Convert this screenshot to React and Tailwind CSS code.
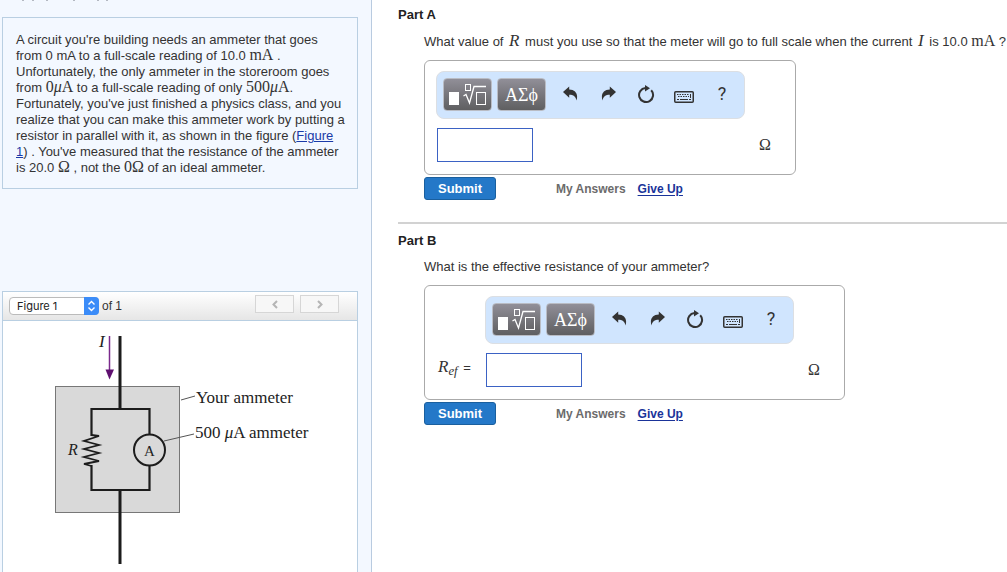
const serif = "font-['Liberation_Serif',serif]";

function Var({ children }) {
  return <i className="mx-0.5 font-['Liberation_Serif',serif] text-[17px] leading-3">{children}</i>;
}

function Unit({ children }) {
  return <span className="font-['Liberation_Serif',serif] text-base leading-3">{children}</span>;
}

function TemplateIcon() {
  return (
    <svg viewBox="0 0 38 22" className="h-[22px] w-[38px]" fill="none" stroke="#fff" aria-hidden="true">
      <rect x="0" y="8" width="10" height="13" fill="#fff" stroke="none" />
      <rect x="16.5" y="0.5" width="5" height="6" />
      <path d="M14.5 12l2.5-1.5 3.5 8.500L25 2.500h12" strokeWidth="1.3" />
      <rect x="27.5" y="8.5" width="9" height="12" />
    </svg>
  );
}

function UndoIcon() {
  return (
    <svg viewBox="0 0 15 15" className="h-[15px] w-[15px]" fill="#333" aria-hidden="true">
      <path d="M0 6L6.2.5v2.900C12.500 3.600 15.500 8 13.500 14.500 12.600 10.500 10.500 8.800 6.200 8.800v3z" />
    </svg>
  );
}

function RedoIcon() {
  return (
    <svg viewBox="0 0 15 15" className="h-[15px] w-[15px]" fill="#333" aria-hidden="true">
      <path d="M15 6L8.800.5v2.900C2.500 3.600-.5 8 1.500 14.500 2.400 10.500 4.500 8.800 8.800 8.800v3z" />
    </svg>
  );
}

function ResetIcon() {
  return (
    <svg viewBox="0 0 18 18" className="h-[18px] w-[18px]" aria-hidden="true">
      <path d="M14.200 5.200A7 7 0 1 1 8.500 3" fill="none" stroke="#333" strokeWidth="2" />
      <path d="M8 0l5 3.200L8 6.600z" fill="#333" />
    </svg>
  );
}

function KeyboardIcon() {
  return (
    <svg viewBox="0 0 20 12" className="h-3 w-5" fill="none" stroke="#333" aria-hidden="true">
      <rect x="0.75" y="0.75" width="18.5" height="10.5" rx="1" strokeWidth="1.5" />
      <path d="M3 3.500h12M4 5.500h11" strokeDasharray="1.5 1" />
      <path d="M3 8.500h2M6 8.500h8M15 8.500h2M16.500 3v4" />
    </svg>
  );
}

const darkButton =
  "flex h-[33px] w-[49px] items-center justify-center rounded border border-[#b9bcc4] bg-linear-to-b from-[#918f98] to-[#5f5f61] text-white";

function Toolbar() {
  return (
    <div className="flex h-12 items-center rounded-lg border border-[#dcdfe3] bg-[#d0e5fe] pr-[3px] pb-px pl-1.5 text-[#333]">
      <button type="button" aria-label="Templates" className={darkButton}>
        <TemplateIcon />
      </button>
      <button
        type="button"
        aria-label="Greek symbols"
        className={`${darkButton} ml-[5px] ${serif} text-lg leading-none`}
      >
        ΑΣϕ
      </button>
      <div className="mb-0.5 ml-[5px] flex">
        <ToolButton label="Undo"><UndoIcon /></ToolButton>
        <ToolButton label="Redo"><RedoIcon /></ToolButton>
        <ToolButton label="Reset"><ResetIcon /></ToolButton>
        <ToolButton label="Keyboard"><span className="block pt-1.5"><KeyboardIcon /></span></ToolButton>
        <ToolButton label="Help">
          <span className="font-[Roboto,sans-serif] text-lg leading-none">?</span>
        </ToolButton>
      </div>
    </div>
  );
}

function ToolButton({ label, children }) {
  return (
    <button type="button" aria-label={label} className="flex h-8 w-[38px] items-center justify-center">
      {children}
    </button>
  );
}

function AnswerBox({ id, label }) {
  return (
    <div className="flex w-fit rounded-md border border-[#aaa] pt-2.5 pr-6 pb-3 pl-[11px]">
      {label && (
        <label htmlFor={id} className="mt-[62px] w-[49px] whitespace-nowrap text-[13px] leading-5">
          {label}
        </label>
      )}
      <div>
        <div className="mr-[26px]">
          <Toolbar />
        </div>
        <div className="mt-[9px] flex items-center justify-between">
          <input
            id={id}
            type="text"
            aria-label={label ? undefined : "Answer"}
            className="ml-px h-[34px] w-24 border border-[#3b62c4] bg-white px-2 text-sm outline-none"
          />
          <Unit>Ω</Unit>
        </div>
      </div>
    </div>
  );
}

function SubmitRow() {
  return (
    <div className="mt-0.5 flex items-center text-xs font-bold">
      <button
        type="button"
        className="h-[23px] w-[72px] rounded-[3px] border border-[#1a5f9e] bg-[#2478c8] text-[13px] leading-none text-white"
      >
        Submit
      </button>
      <span className="ml-[60px] text-[#6b6b6b]">My Answers</span>
      <a href="#give-up" className="ml-3 text-[#1a3399] underline underline-offset-2">
        Give Up
      </a>
    </div>
  );
}

function Circuit() {
  return (
    <svg
      viewBox="0 0 354 252"
      className="block h-[252px] w-[354px] font-['Liberation_Serif',serif]"
      role="img"
      aria-label="Ammeter circuit with resistor R in parallel"
    >
      <rect x="52.5" y="65.5" width="124" height="126" fill="#d9d9d9" stroke="#777" />
      <g fill="none" stroke="#1c1c1c" strokeWidth="2.2">
        <path d="M117 15v73M117 169v74" strokeWidth="3" />
        <path d="M88.500 115V88h58v26M146.500 145v24h-58v-25" />
        <path
          d="M88.500 114l7.500 1-15 5 15 4-15 4 15 4-15 4 15 4-15 3 7.500 2"
          strokeWidth="1.800"
        />
        <circle cx="146.500" cy="129" r="15.500" strokeWidth="2" />
      </g>
      <path d="M106.500 15v35" stroke="#7b2a8c" strokeWidth="1.500" />
      <path d="M102.500 48.500h8.500l-4.500 10z" fill="#5f1070" />
      <path d="M178 79l14-4M161 120l30-7" stroke="#555" />
      <g fill="#222" fontSize="17">
        <text x="96" y="26" fontStyle="italic">I</text>
        <text x="65" y="134" fontSize="16" fontStyle="italic">R</text>
        <text x="141" y="135" fontSize="15">A</text>
        <text x="193" y="82">Your ammeter</text>
        <text x="192" y="117">500 <tspan fontStyle="italic">μ</tspan>A ammeter</text>
      </g>
    </svg>
  );
}

function FigurePanel() {
  return (
    <section id="figure" className="mt-[102px] flex-1 border border-b-0 border-[#b9cfe2] bg-white">
      <div className="flex h-[29px] items-center border-b border-[#b9cfe2] bg-linear-to-b from-white to-[#e6e6e6] pl-1.5 text-xs">
        <div className="relative">
          <select
            aria-label="Figure"
            className="block h-[18px] w-[90px] appearance-none rounded border border-[#bbb] bg-white pl-[7px] font-[Inter,sans-serif] text-[11px] leading-4 text-[#222]"
          >
            <option>Figure 1</option>
          </select>
          <svg viewBox="0 0 15 18" className="pointer-events-none absolute top-0 right-0 h-[18px] w-[15px]" aria-hidden="true">
            <path d="M0 0h11a4 4 0 0 1 4 4v10a4 4 0 0 1-4 4H0z" fill="#3b8cf8" />
            <path d="M4.500 7.500l3-3 3 3M4.500 10.500l3 3 3-3" fill="none" stroke="#fff" strokeWidth="1.4" />
          </svg>
        </div>
        <span className="ml-[3px]">of 1</span>
        <div className="mr-[18px] mb-1 ml-auto flex gap-1.5">
          <PagerButton label="Previous figure" d="M6 1L2.500 4.500 6 8" />
          <PagerButton label="Next figure" d="M2 1l3.500 3.500L2 8" />
        </div>
      </div>
      <Circuit />
    </section>
  );
}

function PagerButton({ label, d }) {
  return (
    <button
      type="button"
      aria-label={label}
      className="flex h-[18px] w-[39px] items-center justify-center border border-[#d6d6d6] bg-[#f7f7f7]"
    >
      <svg viewBox="0 0 8 9" className="h-[9px] w-2" fill="none" stroke="#b5b5b5" strokeWidth="2" aria-hidden="true">
        <path d={d} />
      </svg>
    </button>
  );
}

export default function App() {
  return (
    <div className="flex min-h-screen bg-white font-['Liberation_Sans',Arial,sans-serif] text-[13px] text-[#333]">
      <aside className="flex w-[372px] shrink-0 flex-col border-r border-[#b9cbe0] bg-[#f3f8ff] pr-[13px] pl-0.5">
        <svg viewBox="0 0 120 1" className="mb-4 h-px w-[120px]" aria-hidden="true">
          <path d="M20 .5h2M30 .5h2M44 .5h2M71 .5h2M95 .5h2M104 .5h2" stroke="#b4b9c2" />
        </svg>
        <div className="border border-[#b9cfe2] px-[13px] pt-3.5 pb-3 leading-4 whitespace-nowrap">
          A circuit you're building needs an ammeter that goes
          <br />
          from 0 mA to a full-scale reading of 10.0 <Unit>mA</Unit> .
          <br />
          Unfortunately, the only ammeter in the storeroom goes
          <br />
          from <Unit>0<i>μ</i>A</Unit> to a full-scale reading of only <Unit>500<i>μ</i>A</Unit>.
          <br />
          Fortunately, you've just finished a physics class, and you
          <br />
          realize that you can make this ammeter work by putting a
          <br />
          resistor in parallel with it, as shown in the figure (
          <a href="#figure" className="text-[#1a3aa8] underline">
            Figure
            <br />1
          </a>
          ) . You've measured that the resistance of the ammeter
          <br />
          is 20.0 <Unit>Ω</Unit> , not the <Unit>0Ω</Unit> of an ideal ammeter.
        </div>
        <FigurePanel />
      </aside>

      <main className="min-w-0 flex-1 overflow-hidden pl-[26px]">
        <section className="pt-[7px] pb-[22px]">
          <h2 className="text-[13px] leading-4 font-bold text-[#222]">Part A</h2>
          <div className="pl-[26px]">
            <p className="mt-[11px] mb-2.5 leading-4 whitespace-nowrap">
              What value of <Var>R</Var> must you use so that the meter will go to full scale when the current{" "}
              <Var>I</Var> is 10.0 <Unit>mA</Unit> ?
            </p>
            <AnswerBox id="answer-a" />
            <SubmitRow />
          </div>
        </section>

        <section className="border-t-2 border-[#d2d2d2] pt-[9px]">
          <h2 className="text-[13px] leading-4 font-bold text-[#222]">Part B</h2>
          <div className="pl-[26px]">
            <p className="mt-2.5 mb-2.5 leading-4">What is the effective resistance of your ammeter?</p>
            <AnswerBox
              id="answer-b"
              label={
                <>
                  <Var>
                    R<sub>ef</sub>
                  </Var>{" "}
                  =
                </>
              }
            />
            <SubmitRow />
          </div>
        </section>
      </main>
    </div>
  );
}
